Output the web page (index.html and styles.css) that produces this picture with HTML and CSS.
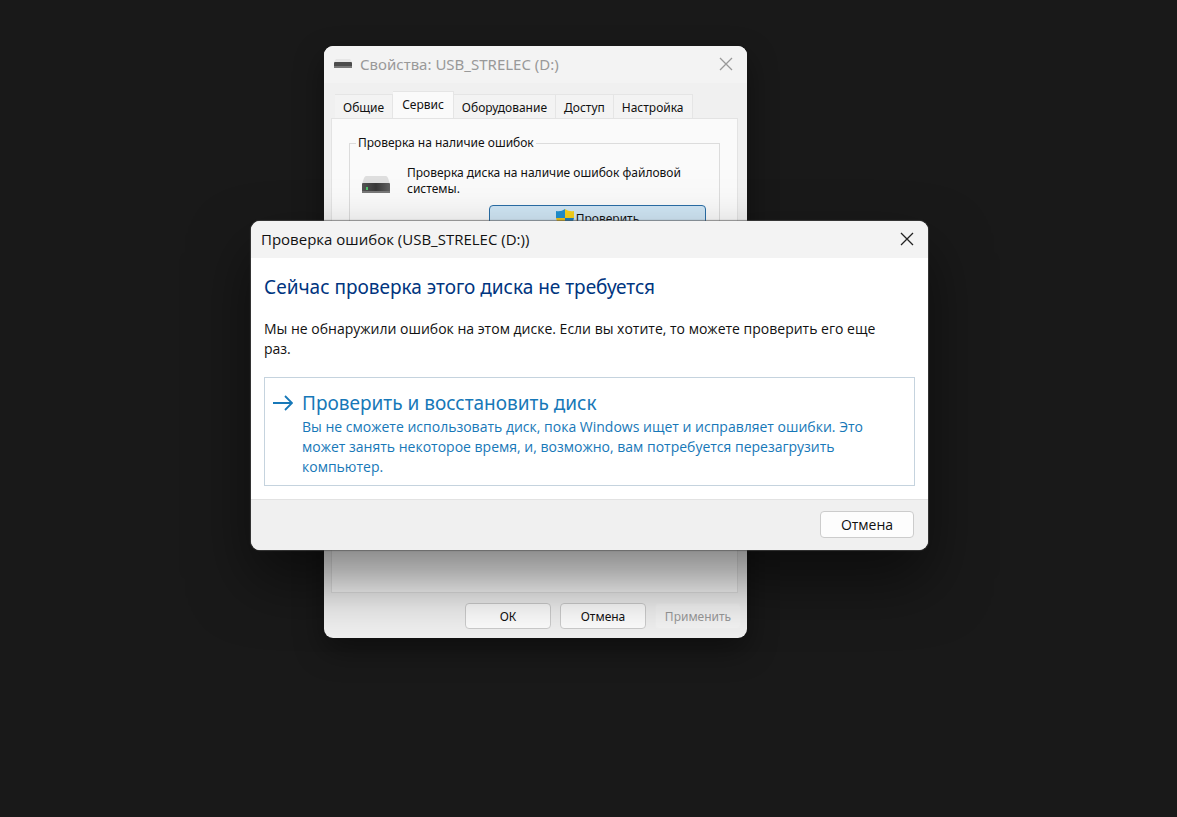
FILE: index.html
```html
<!DOCTYPE html>
<html lang="ru">
<head>
    <meta charset="UTF-8">
    <meta name="viewport" content="width=device-width, initial-scale=1.0">
    <title>Проверка ошибок (USB_STRELEC (D:))</title>
    <link rel="stylesheet" href="styles.css">
</head>
<body>
<main class="desktop">
    <!-- drive properties -->
    <section class="window properties">
        <header class="titlebar">
            <svg class="drive-small" width="18" height="10" viewBox="0 0 18 10" aria-hidden="true">
                <path d="M2 0h14l2 3H0z" fill="#e6e6e6"/>
                <rect y="3" width="18" height="6" rx="1" fill="#4b4b4b"/>
                <rect y="7" width="18" height="2" fill="#777"/>
            </svg>
            <h2 class="title">Свойства: USB_STRELEC (D:)</h2>
            <button type="button" class="close" aria-label="Закрыть">
                <svg width="14" height="14" viewBox="0 0 14 14"><path d="M1 1l12 12M13 1L1 13"/></svg>
            </button>
        </header>
        <nav class="tabs">
            <button type="button" class="tab">Общие</button>
            <button type="button" class="tab active">Сервис</button>
            <button type="button" class="tab">Оборудование</button>
            <button type="button" class="tab">Доступ</button>
            <button type="button" class="tab">Настройка</button>
        </nav>
        <div class="page">
            <fieldset class="group">
                <legend>Проверка на наличие ошибок</legend>
                <div class="group-row">
                    <svg width="28" height="18" viewBox="0 0 28 18" aria-hidden="true">
                        <defs>
                            <linearGradient id="front" x1="0" y1="0" x2="1" y2="0">
                                <stop offset="0" stop-color="#555"/>
                                <stop offset=".5" stop-color="#383838"/>
                                <stop offset="1" stop-color="#606060"/>
                            </linearGradient>
                        </defs>
                        <path d="M4 0h20q1 0 2 2l2 6H0l2-6q1-2 2-2z" fill="#dedede"/>
                        <rect y="7" width="28" height="10" rx="1" fill="url(#front)"/>
                        <rect y="15" width="28" height="2" fill="#777"/>
                        <rect x="4" y="11" width="2" height="3" fill="#4dc36b"/>
                    </svg>
                    <p>Проверка диска на наличие ошибок файловой системы.</p>
                </div>
                <button type="button" class="check">
                    <svg width="18" height="19" viewBox="0 0 18 19" aria-hidden="true">
                        <path d="M9 0Q5 3 0 2v7h9z" fill="#2091d0"/>
                        <path d="M9 0q4 3 9 2v7H9z" fill="#f8d31c"/>
                        <path d="M0 9q1 7 9 10V9z" fill="#f0c419"/>
                        <path d="M18 9q-1 7-9 10V9z" fill="#1b7fc0"/>
                    </svg>
                    <span>Проверить</span>
                </button>
            </fieldset>
        </div>
        <footer class="actions">
            <button type="button" class="btn">ОК</button>
            <button type="button" class="btn">Отмена</button>
            <button type="button" class="btn" disabled>Применить</button>
        </footer>
    </section>

    <!-- error checking dialog -->
    <section class="window dialog" role="dialog" aria-labelledby="dialogTitle">
        <header class="titlebar">
            <h2 class="title" id="dialogTitle">Проверка ошибок (USB_STRELEC (D:))</h2>
            <button type="button" class="close" aria-label="Закрыть">
                <svg width="14" height="14" viewBox="0 0 14 14"><path d="M1 1l12 12M13 1L1 13"/></svg>
            </button>
        </header>
        <div class="content">
            <h1>Сейчас проверка этого диска не требуется</h1>
            <p class="message">Мы не обнаружили ошибок на этом диске. Если вы хотите, то можете проверить его еще раз.</p>
            <button type="button" class="command">
                <svg width="20" height="16" viewBox="0 0 20 16" aria-hidden="true"><path d="M0 8h18M12 1l7 7-7 7"/></svg>
                <span class="command-text">
                    <span class="command-title">Проверить и восстановить диск</span>
                    <span>Вы не сможете использовать диск, пока Windows ищет и исправляет ошибки. Это может занять некоторое время, и, возможно, вам потребуется перезагрузить компьютер.</span>
                </span>
            </button>
        </div>
        <footer class="actions">
            <button type="button" class="btn">Отмена</button>
        </footer>
    </section>
</main>
</body>
</html>
```
FILE: styles.css
```css
* { box-sizing: border-box; }
body { margin: 0; background: #191919; font-family: 'Open Sans', 'Noto Sans', sans-serif; }
h1, h2, p { margin: 0; font-weight: normal; }
button { font-family: inherit; font-size: inherit; color: inherit; padding: 0; cursor: pointer; }

.desktop { position: relative; min-height: 100vh; overflow: hidden; }
.window {
    position: absolute; display: flex; flex-direction: column;
    border-radius: 9px; overflow: hidden; color: #111;
}
.titlebar { display: flex; align-items: center; height: 37px; padding: 0 10px 2px; background: #f3f3f3; }
.title { flex: 1; font-size: 15px; line-height: 20px; }
.close { display: flex; padding: 4px; border: none; background: none; }
.close svg { fill: none; stroke: #222; stroke-width: 1.3; }
.actions { display: flex; justify-content: flex-end; }
.btn { border: 1px solid #ccc; border-radius: 4px; background: #fdfdfd; }

/* properties window */
.properties {
    left: 324px; top: 46px; width: 423px; background: #f0f0f0;
    font-family: 'Noto Sans', sans-serif; font-size: 12px; line-height: 16px;
    box-shadow: 0 12px 30px rgba(0,0,0,0.4);
}
.properties .titlebar { gap: 8px; }
.properties .title { color: #999; }
.properties .close svg { stroke: #999; }
.tabs { display: flex; align-items: flex-end; padding: 8px 8px 0 11px; }
.tab {
    height: 24px; padding: 2px 8px 0; border: 1px solid #e5e5e5;
    border-width: 1px 1px 0 0; background: #f3f3f3;
}
.tab.active { height: 27px; padding: 0 9px 2px; background: #fafafa; }
.page {
    min-height: 475px; margin: 0 9px 0 7px; padding: 16px 17px;
    border: 1px solid #e3e3e3; background: #fafafa;
}
.group { min-width: 0; margin: 0; padding: 14px 13px 12px 12px; border: 1px solid #dcdcdc; }
.group legend { padding: 0 2px; margin-left: -6px; }
.group-row { display: flex; align-items: center; gap: 17px; }
.group-row svg { flex: none; margin-top: 8px; }
.check {
    display: flex; align-items: center; justify-content: center; gap: 2px;
    width: 217px; height: 27px; margin: 8px 0 0 auto;
    border: 1px solid #2a6ea6; border-radius: 4px; background: #d0e6f5;
}
.properties .actions { gap: 9px; padding: 10px 6px 9px; }
.properties .btn { width: 86px; height: 26px; }
.properties .btn:disabled { border-color: #f1f1f1; background: #f4f4f4; color: #999; }

/* dialog on top */
.dialog {
    left: 251px; top: 221px; width: 677px; background: #fff;
    font-size: 14px; line-height: 20px;
    box-shadow: 0 0 1px 1px rgba(80,80,80,0.6), 0 30px 60px rgba(0,0,0,0.5);
}
.content { padding: 15px 13px 13px; }
.content h1, .command-text .command-title {
    font-family: 'Noto Sans', sans-serif; font-size: 19px; line-height: 28px;
}
.content h1 { color: #003580; }
.message { max-width: 630px; margin: 18px 0; }
.command {
    display: flex; gap: 9px; width: 100%; padding: 11px 8px 8px;
    border: 1px solid #c5d3de; background: #fff; color: #1778b8;
    line-height: 20px; text-align: left;
}
.command svg { flex: none; margin-top: 6px; fill: none; stroke: #1778b8; stroke-width: 1.8; }
.command-text span { display: block; }
.dialog .actions { padding: 11px 14px 12px; border-top: 1px solid #e2e2e2; background: #f0f0f0; }
.dialog .btn { width: 94px; height: 27px; }
```
